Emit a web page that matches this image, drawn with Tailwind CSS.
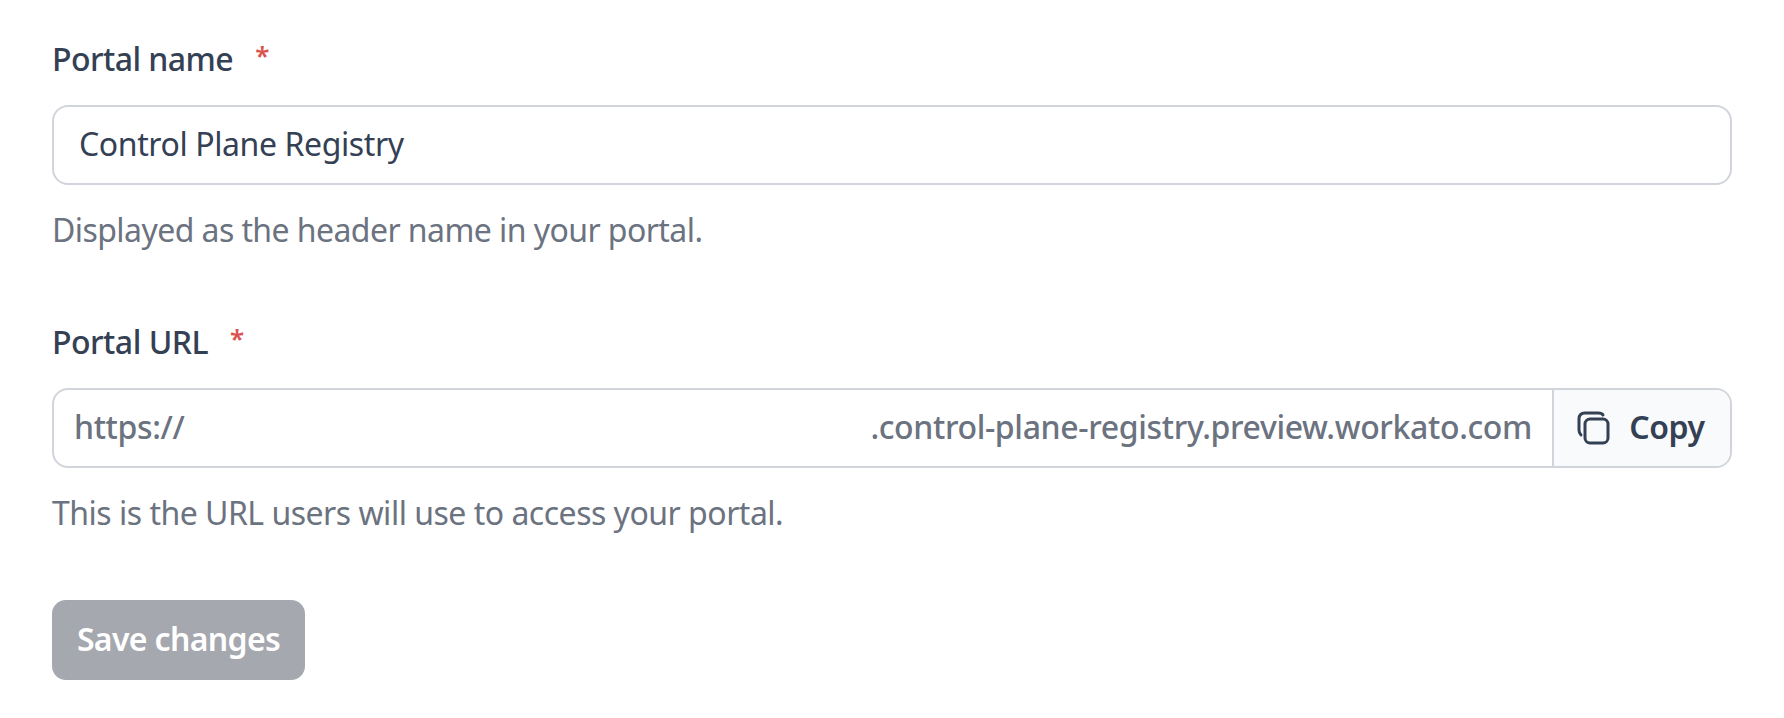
<!DOCTYPE html>
<html lang="en">
<head>
    <meta charset="UTF-8">
    <title>Portal settings</title>
    <script src="https://cdn.jsdelivr.net/npm/@tailwindcss/browser@4"></script>
</head>
<body class="bg-white font-['Noto_Sans',sans-serif]">
    <form class="px-[52px] pt-[40px]">
        <div class="flex items-center h-[38px] text-[32px] font-medium text-[#344054] tracking-[-0.55px]">
            <label>Portal name</label>
            <span class="ml-[22px] -mt-[8px] text-[26px] font-semibold text-[#d9534f]">*</span>
        </div>
        <div class="mt-[27px] flex items-center h-[80px] pb-[2px] border-2 border-[#d1d5db] rounded-[16px] pl-[25px] text-[32px] text-[#344054] tracking-[-0.4px]">
            Control Plane Registry
        </div>
        <p class="mt-[26px] h-[38px] text-[32px] leading-[38px] text-[#6b7280] tracking-[-0.57px]">Displayed as the header name in your portal.</p>

        <div class="mt-[74px] flex items-center h-[38px] text-[32px] font-medium text-[#344054] tracking-[-0.5px]">
            <label>Portal URL</label>
            <span class="ml-[22px] -mt-[8px] text-[26px] font-semibold text-[#d9534f]">*</span>
        </div>
        <div class="mt-[27px] flex h-[80px] border-2 border-[#d1d5db] rounded-[16px] overflow-hidden text-[32px]">
            <div class="flex-1 flex items-center justify-between pb-[2px] pl-[20px] pr-[20px] text-[#6b7280] font-medium tracking-[-0.35px]">
                <span>https://</span>
                <span>.control-plane-registry.preview.workato.com</span>
            </div>
            <button type="button" class="w-[178px] flex items-center justify-center gap-[18px] pr-[2px] border-l-2 border-[#d1d5db] bg-[#f9fafb] text-[#344054] font-semibold tracking-[-0.4px]">
                <svg class="w-[34px] h-[34px]" viewBox="0 0 34 34" fill="none" stroke="#344054" stroke-width="3" stroke-linecap="round" stroke-linejoin="round">
                    <rect x="8" y="8" width="23" height="24" rx="5"/>
                    <path d="M4 24 Q2 22 2 19 V8 Q2 2 8 2 H21 Q25 2 26 4"/>
                </svg>
                <span class="pb-[2px]">Copy</span>
            </button>
        </div>
        <p class="mt-[26px] h-[38px] text-[32px] leading-[38px] text-[#6b7280] tracking-[-0.5px]">This is the URL users will use to access your portal.</p>

        <button type="button" class="mt-[68px] block w-[253px] h-[80px] pb-[2px] rounded-[14px] bg-[#a5a8af] text-white text-[32px] font-semibold tracking-[-0.65px]">Save changes</button>
    </form>
</body>
</html>
